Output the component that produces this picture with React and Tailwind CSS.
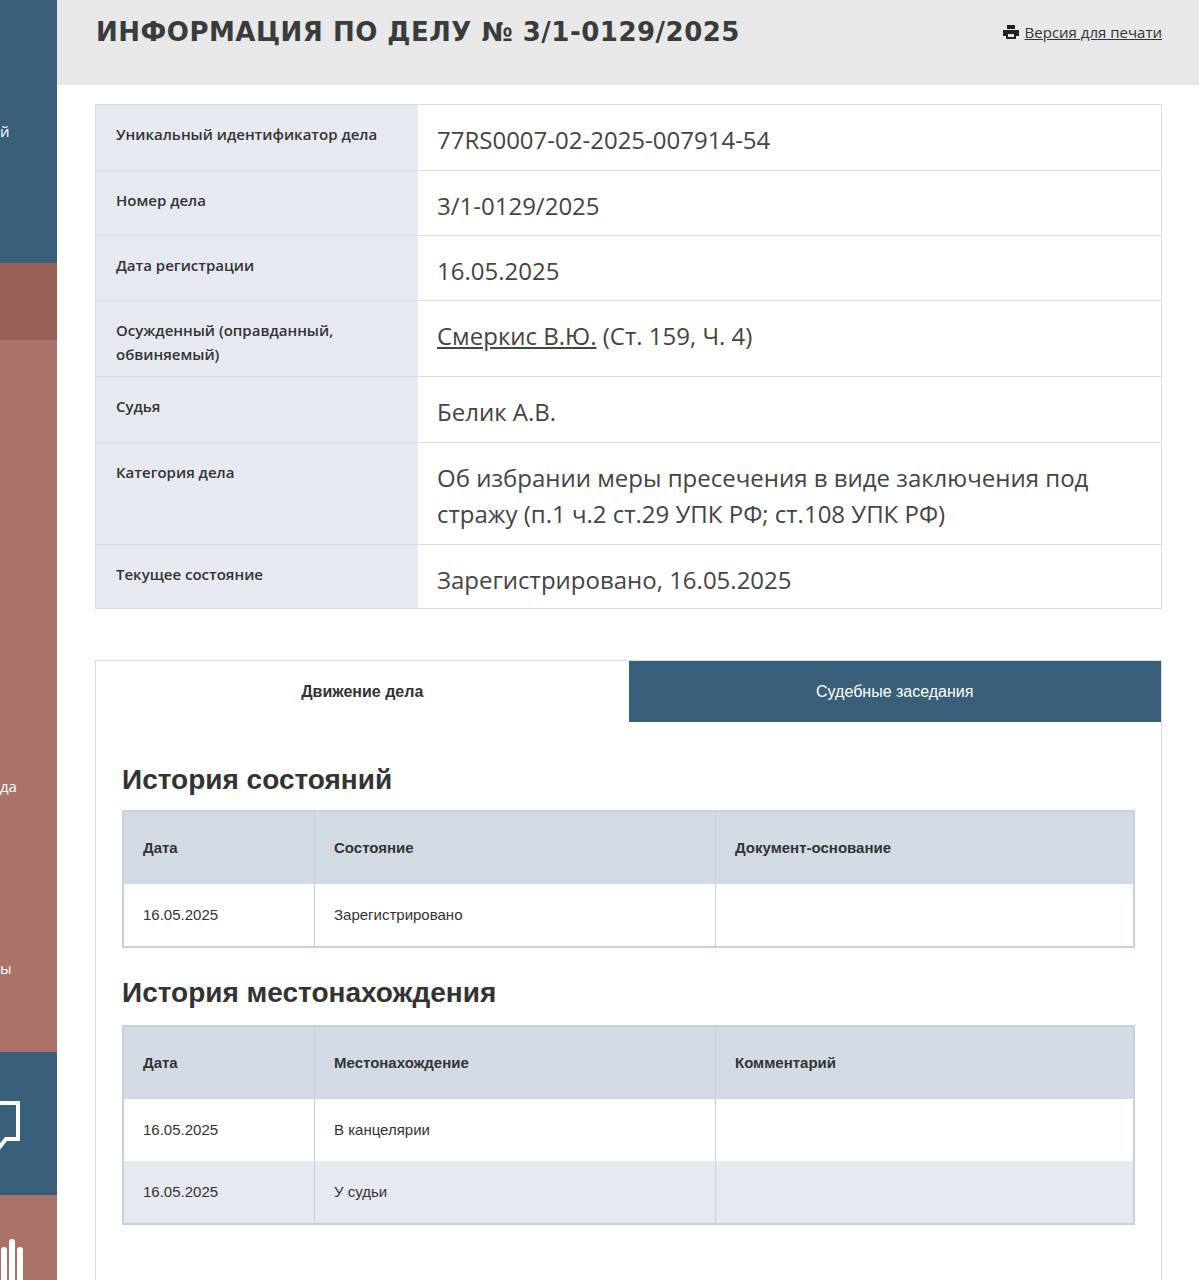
import React from 'react';

const info = [
  ['Уникальный идентификатор дела', '77RS0007-02-2025-007914-54', 'h-[65px]'],
  ['Номер дела', '3/1-0129/2025', 'h-[65px]'],
  ['Дата регистрации', '16.05.2025', 'h-[65px]'],
  ['Осужденный (оправданный, обвиняемый)', null, 'h-[76px]'],
  ['Судья', 'Белик А.В.', 'h-[66px]'],
  ['Категория дела', 'Об избрании меры пресечения в виде заключения под стражу (п.1 ч.2 ст.29 УПК РФ; ст.108 УПК РФ)', 'h-[102px]'],
  ['Текущее состояние', 'Зарегистрировано, 16.05.2025', 'h-[64px]'],
];

const Table = ({ cols, rows }) => (
  <div className="border-2 border-[#c9d0d9] text-[15px] text-[#333]" style={{ fontFamily: '"Liberation Sans", Arial, sans-serif' }}>
    <div className="grid grid-cols-[190px_401px_1fr] bg-[#d3dae3] h-[72px] font-bold">
      {cols.map((c, i) => (
        <div key={i} className={`flex items-center px-[19px] ${i ? 'border-l border-[#c9d0d9]' : ''}`}>{c}</div>
      ))}
    </div>
    {rows.map((r, j) => (
      <div key={j} className={`grid grid-cols-[190px_401px_1fr] h-[62px] ${j % 2 ? 'bg-[#e6e9f0]' : 'bg-white'}`}>
        {r.map((c, i) => (
          <div key={i} className={`flex items-center px-[19px] ${i ? 'border-l border-[#c9d0d9]' : ''}`}>{c}</div>
        ))}
      </div>
    ))}
  </div>
);

export default function App() {
  return (
    <div className="flex min-h-[1280px] bg-white" style={{ fontFamily: '"Open Sans", sans-serif' }}>
      {/* sidebar */}
      <div className="w-[57px] shrink-0 flex flex-col text-white text-[15px] overflow-hidden">
        <div className="h-[263px] bg-[#3a5f7a] flex items-center justify-end pr-[47px]"><span className="-mr-[40px] w-[50px] text-left">й</span></div>
        <div className="h-[77px] bg-[#9a6256]" />
        <div className="h-[712px] bg-[#a9736a] relative">
          <span className="absolute left-0 top-[435px]">да</span>
          <span className="absolute left-0 top-[617px]">ы</span>
        </div>
        <div className="h-[143px] bg-[#3a5f7a] flex items-center">
          <svg width="30" height="70" viewBox="0 0 30 70" className="-ml-[6px]">
            <path d="M0 14 H24 V50 H12 L4 60 V50 H0" fill="none" stroke="white" strokeWidth="4" />
          </svg>
        </div>
        <div className="flex-1 bg-[#a9736a] flex items-end">
          <svg width="30" height="60" viewBox="0 0 30 60">
            <path d="M4 60 V30 M12 60 V22 M20 60 V30" stroke="white" strokeWidth="6" strokeLinecap="round" />
          </svg>
        </div>
      </div>
      {/* main */}
      <div className="flex-1 flex flex-col">
        <div className="h-[85px] bg-[#e8e8e8] flex items-start justify-between pl-[39px] pr-[37px] pt-[13px]">
          <h1 className="text-[26px] font-black tracking-[0.5px] text-[#383d3b] uppercase" style={{ fontFamily: '"DejaVu Sans", sans-serif' }}>Информация по делу № 3/1-0129/2025</h1>
          <a className="flex items-center gap-[6px] text-[15px] text-[#333] underline mt-[8px]">
            <svg width="16" height="14" viewBox="0 0 16 14"><path d="M4 0h8v4H4z M0 5h16v6h-3v3H3v-3H0z" fill="#222" /><path d="M5 9h6v3H5z" fill="#e8e8e8" /></svg>
            Версия для печати
          </a>
        </div>
        <div className="pl-[38px] pr-[37px] pt-[19px]">
          <div className="border border-[#dcdcdc]">
            {info.map(([l, v, h], i) => (
              <div key={i} className={`grid grid-cols-[322px_1fr] ${h} ${i ? 'border-t border-[#dcdcdc]' : ''}`}>
                <div className="bg-[#e6e9f0] px-[20px] pt-[17px] text-[15px] font-semibold text-[#333] leading-[24px]">{l}</div>
                <div className="px-[19px] pt-[17px] text-[24px] text-[#444] leading-[36px]">
                  {v ?? (<><span className="underline">Смеркис В.Ю.</span> (Ст. 159, Ч. 4)</>)}
                </div>
              </div>
            ))}
          </div>
          <div className="mt-[51px] border border-[#dcdcdc] border-b-0 min-h-[620px]">
            <div className="grid grid-cols-2 h-[61px] text-[16px]" style={{ fontFamily: '"Liberation Sans", Arial, sans-serif' }}>
              <div className="flex items-center justify-center font-bold text-[#333]">Движение дела</div>
              <div className="flex items-center justify-center bg-[#3a5f7a] text-white">Судебные заседания</div>
            </div>
            <div className="px-[26px] pt-[42px]">
              <h2 className="text-[28px] font-bold text-[#333] mb-[14px] leading-[32px]" style={{ fontFamily: '"Liberation Sans", Arial, sans-serif' }}>История состояний</h2>
              <Table cols={['Дата', 'Состояние', 'Документ-основание']} rows={[['16.05.2025', 'Зарегистрировано', '']]} />
              <h2 className="text-[28px] font-bold text-[#333] mt-[29px] mb-[16px] leading-[32px]" style={{ fontFamily: '"Liberation Sans", Arial, sans-serif' }}>История местонахождения</h2>
              <Table cols={['Дата', 'Местонахождение', 'Комментарий']} rows={[['16.05.2025', 'В канцелярии', ''], ['16.05.2025', 'У судьи', '']]} />
            </div>
          </div>
        </div>
      </div>
    </div>
  );
}
